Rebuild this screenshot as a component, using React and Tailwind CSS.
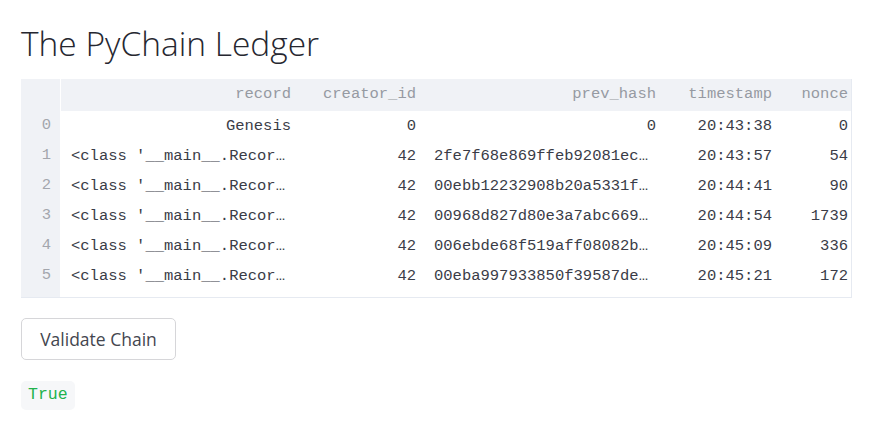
const columns = [
  { key: "record", label: "record", width: "w-[238px]" },
  { key: "creator_id", label: "creator_id", width: "w-[125px]" },
  { key: "prev_hash", label: "prev_hash", width: "w-[240px]" },
  { key: "timestamp", label: "timestamp", width: "w-[116px]" },
  { key: "nonce", label: "nonce", width: "w-[71px]" },
]

const rows = [
  { record: "Genesis", creator_id: "0", prev_hash: "0", timestamp: "20:43:38", nonce: "0" },
  { record: "<class '__main__.Recor…", creator_id: "42", prev_hash: "2fe7f68e869ffeb92081ec…", timestamp: "20:43:57", nonce: "54" },
  { record: "<class '__main__.Recor…", creator_id: "42", prev_hash: "00ebb12232908b20a5331f…", timestamp: "20:44:41", nonce: "90" },
  { record: "<class '__main__.Recor…", creator_id: "42", prev_hash: "00968d827d80e3a7abc669…", timestamp: "20:44:54", nonce: "1739" },
  { record: "<class '__main__.Recor…", creator_id: "42", prev_hash: "006ebde68f519aff08082b…", timestamp: "20:45:09", nonce: "336" },
  { record: "<class '__main__.Recor…", creator_id: "42", prev_hash: "00eba997933850f39587de…", timestamp: "20:45:21", nonce: "172" },
]

const mono = { fontFamily: '"Liberation Mono", "DejaVu Sans Mono", monospace' }

function cellClass(col, value) {
  const pr = col.key === "nonce" ? "pr-[3px]" : "pr-2"
  // truncated values sit flush left like the dataframe does
  const align = value.endsWith("…") ? "text-left pl-[10px]" : "text-right pl-2"
  return `${col.width} ${pr} ${align} whitespace-nowrap overflow-hidden`
}

export default function App() {
  return (
    <div className="w-[880px] h-[432px] bg-white px-[21px] pt-[22px]" style={{ fontFamily: '"Open Sans", "Noto Sans", sans-serif' }}>
      <h1 className="text-[33.5px] leading-[42px] font-light text-[#262730]">The PyChain Ledger</h1>

      <div className="mt-[15px] w-[831px] flex border-r border-b border-[#e6eaf1] text-[15.5px]" style={mono}>
        {/* index column */}
        <div className="w-[39px] bg-[#f0f2f6] flex flex-col pb-[6px]">
          <div className="h-[32px]" />
          {rows.map((_, i) => (
            <div key={i} className="h-[30px] flex items-center justify-end pr-[9px] text-[#a3a6ad]">{i}</div>
          ))}
        </div>
        <div className="w-px" />
        <div className="flex-1 flex flex-col">
          <div className="h-[32px] bg-[#f0f2f6] flex items-center text-[#969aa2]">
            {columns.map((c) => (
              <div key={c.key} className={`${c.width} ${c.key === "nonce" ? "pr-[3px]" : "pr-2"} text-right whitespace-nowrap`}>{c.label}</div>
            ))}
          </div>
          <div className="h-px" />
          {rows.map((r, i) => (
            <div key={i} className="h-[30px] flex items-center text-[#3a3c47]">
              {columns.map((c) => (
                <div key={c.key} className={cellClass(c, r[c.key])}>{r[c.key]}</div>
              ))}
            </div>
          ))}
        </div>
      </div>

      <button className="mt-[20px] h-[42px] w-[155px] rounded-[5px] border border-[#d6d6d9] bg-white text-[17.5px] text-[#44464f] flex items-center justify-center">
        Validate Chain
      </button>

      <div className="mt-[21px] inline-flex items-center h-[29px] px-[7px] rounded-[5px] bg-[#f6f7f9] text-[16.5px] text-[#21b24c]" style={mono}>
        True
      </div>
    </div>
  )
}
